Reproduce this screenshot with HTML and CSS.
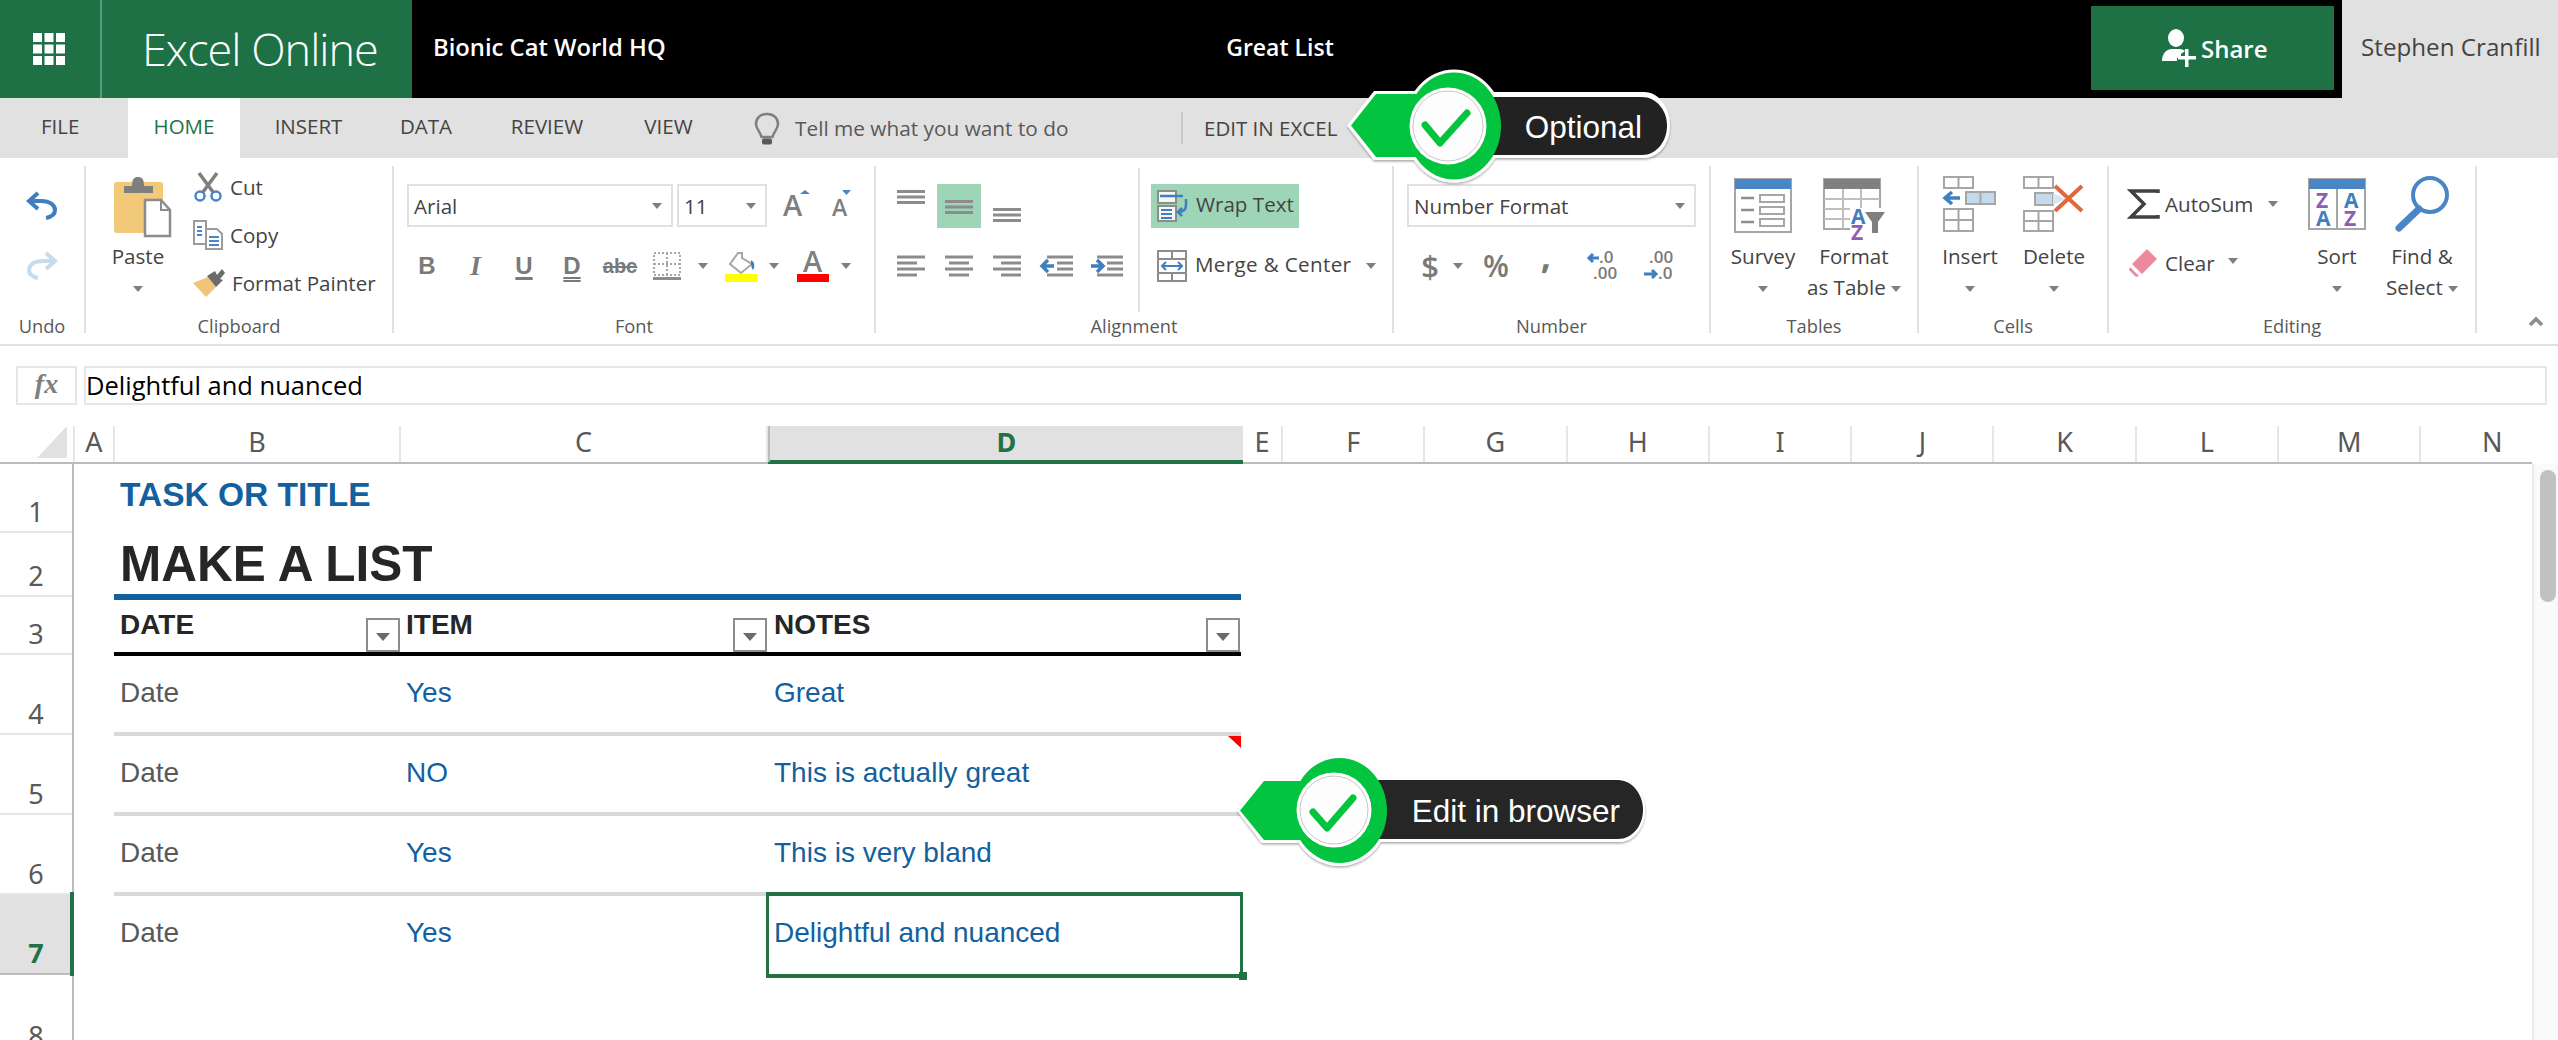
FILE: index.html
```html
<!DOCTYPE html>
<html lang="en">
<head>
<meta charset="utf-8">
<title>Excel Online</title>
<link rel="stylesheet" href="styles.css">
</head>
<body>
<div class="app">
  <header class="topbar">
    <div class="waffle">
      <svg width="32" height="32" viewBox="0 0 32 32"><g fill="#fff"><rect width="9" height="9"/><rect x="11.5" width="9" height="9"/><rect x="23" width="9" height="9"/><rect y="11.5" width="9" height="9"/><rect x="11.5" y="11.5" width="9" height="9"/><rect x="23" y="11.5" width="9" height="9"/><rect y="23" width="9" height="9"/><rect x="11.5" y="23" width="9" height="9"/><rect x="23" y="23" width="9" height="9"/></g></svg>
    </div>
    <div class="brand">Excel Online</div>
    <div class="org">Bionic Cat World HQ</div>
    <div class="doc">Great List</div>
    <button class="share">
      <svg width="36" height="38" viewBox="0 0 36 38"><g fill="#fff"><ellipse cx="15" cy="9" rx="8" ry="9"/><path d="M1 32 C1 24 6 20 11 20 L19 20 C21 20 23 21 24 22 L20 25 L20 29 L16 29 L16 32 Z"/><rect x="24" y="20" width="3.5" height="18"/><rect x="17" y="27" width="18" height="3.5"/></g></svg>
      <span>Share</span>
    </button>
    <div class="user">Stephen Cranfill</div>
  </header>

  <nav class="tabs">
    <a class="tab t-file">FILE</a>
    <a class="tab t-home">HOME</a>
    <a class="tab t-insert">INSERT</a>
    <a class="tab t-data">DATA</a>
    <a class="tab t-review">REVIEW</a>
    <a class="tab t-view">VIEW</a>
    <div class="tell">
      <svg width="26" height="33" viewBox="0 0 26 33"><path d="M13 2 C6 2 2 6.500 2 12 C2 17 6 19 7.500 25 L18.500 25 C20 19 24 17 24 12 C24 6.500 20 2 13 2 Z" fill="none" stroke="#7f7f7f" stroke-width="2.500"/><rect x="8" y="26.500" width="10" height="6" rx="2" fill="#595959"/></svg>
      <span>Tell me what you want to do</span>
    </div>
    <a class="edit-excel">EDIT IN EXCEL</a>
  </nav>

  <section class="ribbon">
    <div class="grp g-undo">
      <div class="undo-body">
        <svg width="32" height="28" viewBox="0 0 32 28"><path d="M12 1 L3 9 L12 17 M3 9 H15 C24 9 29 13 29 18 C29 23 25 25 20 26" fill="none" stroke="#3f7fbf" stroke-width="4"/></svg>
        <svg width="32" height="28" viewBox="0 0 32 28"><path d="M20 1 L29 9 L20 17 M29 9 H17 C8 9 3 13 3 18 C3 23 7 25 12 26" fill="none" stroke="#c5dbee" stroke-width="4"/></svg>
      </div>
      <div class="glabel">Undo</div>
    </div>

    <div class="grp g-clip">
      <div class="clip-body">
        <div class="big">
          <div class="big-ic big-ic-paste">
            <svg width="58" height="62" viewBox="0 0 58 62"><rect y="6" width="49" height="51" rx="3" fill="#f2c879"/><path d="M10 17 V10 H18 C18 3 20 1 24 1 C28 1 30 3 30 10 H39 V17 Z" fill="#7f7f7f"/><path d="M31 24 H47 L56 34 V60 H31 Z" fill="#fff" stroke="#8c8c8c" stroke-width="2.500"/><path d="M47 24 V34 H56" fill="none" stroke="#8c8c8c" stroke-width="2"/></svg>
          </div>
          <div class="big-t">Paste</div>
          <div class="big-t"><i class="caret"></i></div>
        </div>
        <div class="clip-list">
          <div class="sm">
            <svg width="30" height="30" viewBox="0 0 30 30"><path d="M6 1 L20 20 M24 1 L10 20" stroke="#7f7f7f" stroke-width="3.500" fill="none"/><circle cx="7" cy="24" r="4.500" fill="none" stroke="#4a86c5" stroke-width="2.500"/><circle cx="23" cy="24" r="4.500" fill="none" stroke="#4a86c5" stroke-width="2.500"/></svg>
            <span>Cut</span>
          </div>
          <div class="sm">
            <svg width="30" height="30" viewBox="0 0 30 30"><path d="M1 1 H13 V24 H1 Z" fill="#fff" stroke="#9c9c9c" stroke-width="2"/><path d="M4 7 H9 M4 11 H9 M4 15 H9" stroke="#4a86c5" stroke-width="2"/><path d="M13 9 H24 L29 14 V29 H13 Z" fill="#fff" stroke="#9c9c9c" stroke-width="2"/><path d="M16 17 H26 M16 21 H26 M16 25 H26" stroke="#4a86c5" stroke-width="2"/></svg>
            <span>Copy</span>
          </div>
          <div class="sm">
            <svg width="32" height="30" viewBox="0 0 32 30"><path d="M0 15 L15 9 L23 19 L13 29 Z" fill="#f0c47a"/><path d="M14 8 L22 3 L24 7 L29 1 L32 5 L27 11 L30 12 L23 19 Z" fill="#6b6b6b"/></svg>
            <span>Format Painter</span>
          </div>
        </div>
      </div>
      <div class="glabel">Clipboard</div>
    </div>

    <div class="grp g-font">
      <div class="rows">
        <div class="row-1 font-r1">
          <div class="sel sel-name"><span>Arial</span><i class="caret"></i></div>
          <div class="sel sel-size"><span>11</span><i class="caret"></i></div>
          <svg class="grow" width="80" height="30" viewBox="0 0 80 30"><text class="glyph-a" x="6" y="26" font-size="29">A</text><path d="M23 4 L28 0 L33 4 Z" fill="#4a86c5"/><text class="glyph-a" x="55" y="26" font-size="23">A</text><path d="M65 0 H74 L69.500 5 Z" fill="#4a86c5"/></svg>
        </div>
        <div class="row-2 font-r2">
          <b class="fmt">B</b>
          <i class="fmt fmt-i">I</i>
          <span class="fmt fmt-u">U</span>
          <span class="fmt fmt-d">D</span>
          <span class="fmt fmt-s">abc</span>
          <svg width="28" height="28" viewBox="0 0 28 28"><path d="M1 1 H27 V23 H1 Z M14 1 V23 M1 12 H27" fill="none" stroke="#a6a6a6" stroke-width="2" stroke-dasharray="2 2"/><rect y="25" width="28" height="3" fill="#8c8c8c"/></svg>
          <i class="caret"></i>
          <svg width="32" height="32" viewBox="0 0 32 32"><path d="M13 3 L17 3 L17 8 L27 14 L16 23 L5 14 Z" fill="#fff" stroke="#a6a6a6" stroke-width="2"/><path d="M26 10 C30 12 30 17 28 20 C26 18 26 14 26 10 Z" fill="#3f7fbf"/><rect y="24" width="32" height="8" fill="#ff0"/></svg>
          <i class="caret"></i>
          <svg class="end" width="32" height="32" viewBox="0 0 32 32"><text class="glyph-a" x="6" y="22" font-size="29">A</text><rect y="24" width="32" height="8" fill="#f00"/></svg>
          <i class="caret"></i>
        </div>
      </div>
      <div class="glabel">Font</div>
    </div>

    <div class="grp g-align">
      <div class="align-body">
        <div class="al-block">
          <div class="al-grid al-r1">
            <svg width="28" height="44" viewBox="0 0 28 44"><path d="M0 7.500 H28 M0 13 H28 M0 18.500 H28" stroke="#8c8c8c" stroke-width="3"/></svg>
            <div class="hl hl-cell"><svg width="28" height="44" viewBox="0 0 28 44"><path d="M0 17.500 H28 M0 23 H28 M0 28.500 H28" stroke="#8c8c8c" stroke-width="3"/></svg></div>
            <svg width="28" height="44" viewBox="0 0 28 44"><path d="M0 25.500 H28 M0 31 H28 M0 36.500 H28" stroke="#8c8c8c" stroke-width="3"/></svg>
          </div>
          <div class="al-grid al-r2">
            <svg width="28" height="22" viewBox="0 0 28 22"><path d="M0 2 H28 M0 8 H20 M0 14 H28 M0 20 H20" stroke="#8c8c8c" stroke-width="3"/></svg>
            <svg width="28" height="22" viewBox="0 0 28 22"><path d="M0 2 H28 M4 8 H24 M0 14 H28 M4 20 H24" stroke="#8c8c8c" stroke-width="3"/></svg>
            <svg width="28" height="22" viewBox="0 0 28 22"><path d="M0 2 H28 M8 8 H28 M0 14 H28 M8 20 H28" stroke="#8c8c8c" stroke-width="3"/></svg>
            <svg width="32" height="22" viewBox="0 0 32 22"><path d="M6 2 H32 M16 8 H32 M16 14 H32 M6 20 H32" stroke="#8c8c8c" stroke-width="3"/><path d="M1 11 H13 M7 5 L1 11 L7 17" stroke="#3f7fbf" stroke-width="3.500" fill="none"/></svg>
            <svg width="32" height="22" viewBox="0 0 32 22"><path d="M6 2 H32 M16 8 H32 M16 14 H32 M6 20 H32" stroke="#8c8c8c" stroke-width="3"/><path d="M0 11 H12 M6 5 L12 11 L6 17" stroke="#3f7fbf" stroke-width="3.500" fill="none"/></svg>
          </div>
        </div>
        <div class="wm-block">
          <div class="wm hl">
            <svg width="32" height="32" viewBox="0 0 32 32"><rect x="1" y="1" width="18" height="12" fill="#f5f5f5" stroke="#8c8c8c" stroke-width="2"/><path d="M3 6 H26" stroke="#3f7fbf" stroke-width="2.500"/><rect x="1" y="16" width="18" height="15" fill="#f5f5f5" stroke="#8c8c8c" stroke-width="2"/><path d="M4 20 H15 M4 24 H15 M4 28 H15" stroke="#3f7fbf" stroke-width="2"/><path d="M29 9 V15 C29 19 27 22 21 22 M25 18 L21 22 L25 26" fill="none" stroke="#3f7fbf" stroke-width="2.500"/></svg>
            <span>Wrap Text</span>
          </div>
          <div class="wm wm-merge">
            <svg width="32" height="32" viewBox="0 0 32 32"><rect x="2" y="1" width="28" height="30" fill="#fff" stroke="#8c8c8c" stroke-width="2"/><path d="M2 9 H30 M2 23 H30 M16 1 V9 M16 23 V31" stroke="#8c8c8c" stroke-width="2"/><path d="M6 16 H26 M10 12 L6 16 L10 20 M22 12 L26 16 L22 20" fill="none" stroke="#3f7fbf" stroke-width="2"/></svg>
            <span>Merge &amp; Center</span>
            <i class="caret"></i>
          </div>
        </div>
      </div>
      <div class="glabel">Alignment</div>
    </div>

    <div class="grp g-num">
      <div class="rows">
        <div class="row-1"><div class="sel sel-num"><span>Number Format</span><i class="caret"></i></div></div>
        <div class="row-2 num-r2">
          <span class="sym sym-d">$</span>
          <i class="caret"></i>
          <span class="sym sym-p">%</span>
          <span class="sym sym-c">,</span>
          <svg class="end" width="30" height="30" viewBox="0 0 30 30"><text class="dec" x="11" y="12">.0</text><text class="dec" x="5" y="28">.00</text><path d="M1 7 H11 M5 3 L1 7 L5 11" stroke="#3f7fbf" stroke-width="3" fill="none"/></svg>
          <svg width="30" height="30" viewBox="0 0 30 30"><text class="dec" x="6" y="12">.00</text><text class="dec" x="15" y="28">.0</text><path d="M1 23 H13 M9 19 L13 23 L9 27" stroke="#3f7fbf" stroke-width="3" fill="none"/></svg>
        </div>
      </div>
      <div class="glabel">Number</div>
    </div>

    <div class="grp g-tables">
      <div class="bigs bigs-tables">
        <div class="big">
          <div class="big-ic big-ic-low">
            <svg width="58" height="56" viewBox="0 0 58 56"><rect x="1" y="1" width="56" height="53" fill="#fff" stroke="#a6a6a6" stroke-width="2"/><rect x="1" y="1" width="56" height="10" fill="#4a86c5"/><path d="M7 20 H20 M7 32 H20 M7 44 H20" stroke="#8c8c8c" stroke-width="2.500"/><path d="M26 17 H50 V24 H26 Z M26 29 H50 V36 H26 Z M26 41 H50 V48 H26 Z" fill="#fff" stroke="#a6a6a6" stroke-width="2"/></svg>
          </div>
          <div class="big-t">Survey</div>
          <div class="big-t"><i class="caret"></i></div>
        </div>
        <div class="big">
          <div class="big-ic big-ic-low">
            <svg width="62" height="62" viewBox="0 0 62 62"><rect x="1" y="1" width="56" height="50" fill="#fff" stroke="#a6a6a6" stroke-width="2"/><rect x="1" y="1" width="56" height="10" fill="#808080"/><path d="M1 21 H57 M1 31 H57 M1 41 H57 M20 11 V51 M38 11 V51" stroke="#bfbfbf" stroke-width="2"/><rect x="27" y="30" width="35" height="32" fill="#fff"/><text class="az az-a" x="28" y="46">A</text><text class="az az-z" x="28" y="62">Z</text><path d="M42 34 H62 L55 44 V55 H49 V44 Z" fill="#7f7f7f"/></svg>
          </div>
          <div class="big-t">Format</div>
          <div class="big-t">as Table <i class="caret"></i></div>
        </div>
      </div>
      <div class="glabel">Tables</div>
    </div>

    <div class="grp g-cells">
      <div class="bigs bigs-cells">
        <div class="big">
          <div class="big-ic">
            <svg width="54" height="56" viewBox="0 0 54 56"><path d="M1 1 H30 V12 H1 Z M15.500 1 V12" fill="#fff" stroke="#a6a6a6" stroke-width="2"/><path d="M23 16 H52 V28 H23 Z" fill="#c5d9ed" stroke="#a6a6a6" stroke-width="2"/><path d="M37.500 16 V28" stroke="#a6a6a6" stroke-width="2"/><path d="M3 22 H17 M9 16 L2 22 L9 28" fill="none" stroke="#3f7fbf" stroke-width="3.500"/><path d="M1 33 H30 V55 H1 Z M15.500 33 V55 M1 44 H30" fill="#fff" stroke="#a6a6a6" stroke-width="2"/></svg>
          </div>
          <div class="big-t">Insert</div>
          <div class="big-t"><i class="caret"></i></div>
        </div>
        <div class="big">
          <div class="big-ic">
            <svg width="62" height="56" viewBox="0 0 62 56"><path d="M1 1 H30 V12 H1 Z M15.500 1 V12" fill="#fff" stroke="#a6a6a6" stroke-width="2"/><path d="M12 17 H30 V29 H12 Z" fill="#c5d9ed" stroke="#a6a6a6" stroke-width="2"/><path d="M30 17 L42 23 L30 29 Z" fill="#d8e6f3"/><path d="M1 35 H30 V55 H1 Z M15.500 35 V55 M1 45 H30" fill="#fff" stroke="#a6a6a6" stroke-width="2"/><path d="M32 10 L59 35 M59 10 L32 35" stroke="#e2673c" stroke-width="4"/></svg>
          </div>
          <div class="big-t">Delete</div>
          <div class="big-t"><i class="caret"></i></div>
        </div>
      </div>
      <div class="glabel">Cells</div>
    </div>

    <div class="grp g-edit">
      <div class="edit-body">
        <div class="edit-left">
          <div class="ed ed-sum">
            <svg width="30" height="30" viewBox="0 0 30 30"><path d="M29 4 V2 H2 L15 15 L2 28 H29 V26" fill="none" stroke="#404040" stroke-width="3.500"/></svg>
            <span>AutoSum</span>
            <i class="caret"></i>
          </div>
          <div class="ed ed-clear">
            <svg width="28" height="28" viewBox="0 0 28 28"><path d="M18 0 L28 10 L13 25 L3 15 Z" fill="#ec8a9d"/><path d="M1 18 L10 27 L7 28 L0 21 Z" fill="#ec8a9d"/></svg>
            <span>Clear</span>
            <i class="caret"></i>
          </div>
        </div>
        <div class="big">
          <div class="big-ic big-ic-low">
            <svg width="58" height="52" viewBox="0 0 58 52"><rect x="1" y="1" width="56" height="50" fill="#fff" stroke="#a6a6a6" stroke-width="2"/><rect x="1" y="1" width="56" height="10" fill="#4a86c5"/><path d="M29 11 V51" stroke="#a6a6a6" stroke-width="2"/><text class="az az-z" x="8" y="30">Z</text><text class="az az-a" x="36" y="30">A</text><text class="az az-a" x="8" y="48">A</text><text class="az az-z" x="36" y="48">Z</text></svg>
          </div>
          <div class="big-t">Sort</div>
          <div class="big-t"><i class="caret"></i></div>
        </div>
        <div class="big">
          <div class="big-ic">
            <svg width="56" height="56" viewBox="0 0 56 56"><ellipse cx="36" cy="19" rx="17" ry="17" fill="none" stroke="#4a86c5" stroke-width="4"/><path d="M25 33 L5 52" stroke="#4a86c5" stroke-width="7" stroke-linecap="round"/></svg>
          </div>
          <div class="big-t">Find &amp;</div>
          <div class="big-t">Select <i class="caret"></i></div>
        </div>
      </div>
      <div class="glabel">Editing</div>
    </div>

    <div class="collapse">
      <svg width="16" height="11" viewBox="0 0 16 11"><path d="M2 9 L8 3 L14 9" fill="none" stroke="#8c8c8c" stroke-width="3.500"/></svg>
    </div>
  </section>

  <div class="formula">
    <div class="fx">fx</div>
    <div class="finput">Delightful and nuanced</div>
  </div>

  <div class="colheads">
    <div class="corner"><svg width="30" height="32" viewBox="0 0 30 32"><path d="M30 0 V32 H0 Z" fill="#e1e1e1"/></svg></div>
    <div class="ch ch-a">A</div>
    <div class="ch ch-b">B</div>
    <div class="ch ch-c">C</div>
    <div class="ch ch-d">D</div>
    <div class="ch ch-e">E</div>
    <div class="ch">F</div>
    <div class="ch">G</div>
    <div class="ch">H</div>
    <div class="ch">I</div>
    <div class="ch">J</div>
    <div class="ch">K</div>
    <div class="ch">L</div>
    <div class="ch">M</div>
    <div class="ch ch-n">N</div>
  </div>

  <main class="sheet">
    <div class="rowheads">
      <div class="rh rh-1">1</div>
      <div class="rh rh-2">2</div>
      <div class="rh rh-3">3</div>
      <div class="rh rh-n">4</div>
      <div class="rh rh-n">5</div>
      <div class="rh rh-n">6</div>
      <div class="rh rh-n rh-sel">7</div>
      <div class="rh rh-8">8</div>
    </div>
    <div class="cells">
      <div class="srow srow-1"><div class="task">TASK OR TITLE</div></div>
      <div class="srow srow-2"><div class="make">MAKE A LIST</div></div>
      <div class="srow srow-3">
        <div class="cell c-b"><span>DATE</span><button class="filter"><i class="caret"></i></button></div>
        <div class="cell c-c"><span>ITEM</span><button class="filter"><i class="caret"></i></button></div>
        <div class="cell c-d"><span>NOTES</span><button class="filter"><i class="caret"></i></button></div>
      </div>
      <div class="srow srow-data">
        <div class="cell c-b">Date</div><div class="cell c-c blue">Yes</div><div class="cell c-d blue">Great</div>
      </div>
      <div class="srow srow-data">
        <div class="cell c-b">Date</div><div class="cell c-c blue">NO</div><div class="cell c-d blue">This is actually great<i class="comment"></i></div>
      </div>
      <div class="srow srow-data">
        <div class="cell c-b">Date</div><div class="cell c-c blue">Yes</div><div class="cell c-d blue">This is very bland</div>
      </div>
      <div class="srow srow-data srow-last">
        <div class="cell c-b">Date</div><div class="cell c-c blue">Yes</div><div class="cell c-d blue">Delightful and nuanced</div>
      </div>
      <div class="selection"><i class="handle"></i></div>
    </div>
    <div class="vscroll"><div class="thumb"></div></div>
  </main>

  <div class="callout callout-opt">
    <svg width="330" height="124" viewBox="1345 65 330 124">
      <defs><filter id="sh1" x="-5%" y="-5%" width="110%" height="115%"><feDropShadow dx="0" dy="1.500" stdDeviation="1.200" flood-color="#000" flood-opacity=".35"/></filter></defs>
      <g filter="url(#sh1)">
        <path d="M1430 92 H1644 C1659 92 1670 108 1670 125 C1670 143 1659 158 1644 158 H1430 Z" fill="#fff"/>
        <path d="M1347 125.500 L1374 91 H1420 V160 H1374 Z" fill="#fff"/>
        <ellipse cx="1454" cy="126" rx="50" ry="56.500" fill="#fff"/>
      </g>
      <path d="M1470 97 H1642 C1656 97 1667 110 1667 125.500 C1667 142 1656 155 1642 155 H1470 Z" fill="#222"/>
      <path d="M1351 125.500 L1376 94 H1420 V157 H1376 Z" fill="#03c43f"/>
      <ellipse cx="1454" cy="126" rx="47" ry="53.500" fill="#03c43f"/>
      <circle cx="1448" cy="126" r="38.500" fill="#fff"/>
      <circle cx="1448" cy="126" r="35" fill="#fdfdfd" stroke="#c8c8c8" stroke-width="1"/>
      <path d="M1425 125 L1440 143 L1467 113" fill="none" stroke="#03c43f" stroke-width="7" stroke-linecap="round" stroke-linejoin="round"/>
    </svg>
    <span class="callout-label">Optional</span>
  </div>

  <div class="callout callout-edit">
    <svg width="415" height="118" viewBox="1235 752 415 118">
      <defs><filter id="sh2" x="-5%" y="-5%" width="110%" height="115%"><feDropShadow dx="0" dy="1.500" stdDeviation="1.200" flood-color="#000" flood-opacity=".35"/></filter></defs>
      <g filter="url(#sh2)">
        <path d="M1320 778 H1619 C1634 778 1645 794 1645 810 C1645 827 1634 842 1619 842 H1320 Z" fill="#fff"/>
        <path d="M1237 810.500 L1262 779 H1310 V843 H1262 Z" fill="#fff"/>
        <ellipse cx="1339.500" cy="811" rx="50" ry="55" fill="#fff"/>
      </g>
      <path d="M1370 780 H1618 C1632 780 1643 794 1643 810 C1643 826 1632 839 1618 839 H1370 Z" fill="#262626"/>
      <path d="M1240 810.500 L1264 781 H1310 V840 H1264 Z" fill="#03c43f"/>
      <ellipse cx="1339.500" cy="810.500" rx="47.500" ry="52.500" fill="#03c43f"/>
      <circle cx="1334" cy="810" r="37.500" fill="#fff"/>
      <circle cx="1334" cy="810" r="34" fill="#fdfdfd" stroke="#c8c8c8" stroke-width="1"/>
      <path d="M1313 812 L1327 828 L1353 798" fill="none" stroke="#03c43f" stroke-width="7" stroke-linecap="round" stroke-linejoin="round"/>
    </svg>
    <span class="callout-label">Edit in browser</span>
  </div>
</div>
</body>
</html>
```

FILE: styles.css
```css
* { box-sizing: border-box; }
html, body { margin: 0; padding: 0; height: 100%; overflow: hidden; background: #fff; }
body { font-family: "Open Sans", "Noto Sans", sans-serif; color: #444; }
svg { display: block; flex: none; overflow: visible; }
.app { position: relative; width: 2558px; height: 1040px; overflow: hidden; }

.caret { display: inline-block; width: 0; height: 0; flex: none; border-left: 5.5px solid transparent; border-right: 5.5px solid transparent; border-top: 6px solid #7f7f7f; vertical-align: middle; }

/* top bar */
.topbar { display: flex; height: 98px; background: #000; color: #fff; align-items: stretch; }
.waffle { width: 102px; background: #1e7145; border-right: 2px solid #5a9a78; display: flex; align-items: center; justify-content: center; padding-right: 2px; }
.brand { width: 310px; background: #1e7145; font-size: 45px; font-weight: 300; line-height: 98px; padding-left: 40px; white-space: nowrap; letter-spacing: -1px; }
.org { width: 588px; font-size: 23.800px; font-weight: 600; line-height: 94px; padding-left: 21px; white-space: nowrap; }
.doc { width: 560px; font-size: 23px; font-weight: 600; line-height: 94px; text-align: center; }
.share { margin: 6px 0 8px 531px; width: 243px; border: 0; background: #1e7145; color: #fff; font: 600 24px "Open Sans", sans-serif; display: flex; align-items: center; padding: 0 0 0 70px; gap: 4px; }
.user { margin-left: 8px; flex: 1; background: #e1e1e1; color: #444; font-size: 24.200px; line-height: 94px; padding-left: 19px; white-space: nowrap; }

/* tabs */
.tabs { display: grid; grid-template-columns: 128px 112px 137px 98px 144px 99px 463px 1fr; height: 60px; background: #e1e1e1; align-items: stretch; }
.tab { font-size: 20.500px; line-height: 56px; text-align: center; color: #444; }
.t-file { text-align: left; padding-left: 41px; }
.t-home { background: #fff; color: #217346; }
.tell { display: flex; align-items: center; padding-left: 36px; gap: 15px; font-size: 20.800px; color: #595959; }
.tell span { margin-top: -1px; white-space: nowrap; }
.edit-excel { font-size: 20.500px; line-height: 32px; height: 32px; margin-top: 14px; border-left: 2px solid #c8c8c8; padding-left: 21px; color: #444; white-space: nowrap; }

/* ribbon */
.ribbon { display: flex; height: 188px; padding-top: 8px; border-bottom: 2px solid #e1e1e1; }
.grp { height: 167px; border-right: 2px solid #e1e1e1; display: flex; flex-direction: column; font-size: 20.600px; color: #444; }
.glabel { margin-top: auto; text-align: center; font-size: 18.300px; color: #595959; line-height: 24px; height: 24px; white-space: nowrap; margin-bottom: -5px; }
.g-undo { width: 86px; }
.g-clip { width: 308px; }
.g-font { width: 482px; }
.g-align { width: 518px; }
.g-num { width: 317px; }
.g-tables { width: 208px; }
.g-cells { width: 190px; }
.g-edit { width: 368px; }
.collapse { flex: 1; display: flex; justify-content: flex-end; align-items: flex-end; padding: 0 14px 6px 0; height: 167px; }

.undo-body { display: flex; flex-direction: column; align-items: center; gap: 32px; padding-top: 26px; }

.big { display: flex; flex-direction: column; align-items: center; white-space: nowrap; }
.big-ic { height: 75px; padding-top: 10px; }
.big-ic-low { padding-top: 12px; }
.big-ic-paste { padding-left: 10px; }
.big-t { line-height: 31px; height: 31px; }

.clip-body { display: flex; padding-left: 12px; }
.clip-body > .big { width: 80px; }
.clip-list { display: grid; grid-auto-rows: 48px; margin: -3px 0 0 15px; }
.sm { display: flex; align-items: center; gap: 7px; white-space: nowrap; }

.rows { padding-top: 18px; }
.row-1 { height: 44px; }
.row-2 { margin-top: 16px; height: 44px; align-items: center; }
.font-r1 { display: flex; padding-left: 13px; gap: 4px; }
.sel { height: 43px; border: 2px solid #e1e1e1; display: flex; align-items: center; padding: 0 9px 0 5px; color: #444; white-space: nowrap; }
.sel .caret { margin-left: auto; }
.sel-name { width: 266px; }
.sel-size { width: 90px; }
.sel-num { width: 289px; margin-left: 13px; }
.grow { margin: 6px 0 0 6px; }
.glyph-a { font-family: "Open Sans", sans-serif; fill: #7f7f7f; font-weight: 600; }
.font-r2 { display: grid; grid-template-columns: 48px 49px 48px 48px 48px 46px 26px 50px 16px 47px 34px; justify-items: center; margin-left: 9px; }
.end { justify-self: end; }
.fmt { font-family: "Liberation Sans", sans-serif; font-size: 24px; font-weight: 700; color: #7a7a7a; font-style: normal; }
.fmt-i { font-family: "Liberation Serif", serif; font-style: italic; font-size: 27px; }
.fmt-u { text-decoration: underline; text-underline-offset: 3px; text-decoration-thickness: 2.500px; }
.fmt-d { text-decoration: underline double; text-underline-offset: 3px; }
.fmt-s { text-decoration: line-through; font-size: 20px; }

.align-body { display: flex; }
.al-block { width: 264px; height: 144px; margin-top: 2px; padding: 16px 0 0 11px; border-right: 2px solid #e1e1e1; }
.al-grid { display: grid; grid-template-columns: 48px 48px 48px 52px 48px; justify-items: center; align-items: center; }
.al-r1 { height: 44px; }
.al-r2 { margin-top: 27px; }
.hl { background: #9fd5b7; }
.hl-cell { width: 44px; height: 44px; display: flex; justify-content: center; }
.wm-block { padding: 18px 0 0 11px; }
.wm { display: flex; align-items: center; height: 44px; width: 148px; padding-left: 6px; gap: 7px; white-space: nowrap; }
.wm span { margin-top: -5px; }
.wm-merge { margin-top: 16px; width: 230px; }
.wm-merge span { letter-spacing: .35px; }
.wm-merge svg { margin-left: -1px; }
.wm-merge .caret { margin-left: 8px; }

.num-r2 { display: grid; grid-template-columns: 46px 10px 66px 24px 65px 80px; justify-items: center; margin-left: 13px; }
.sym { font-family: "Open Sans", sans-serif; color: #7a7a7a; font-weight: 600; line-height: 1; }
.sym-d { font-size: 31px; }
.sym-p { font-size: 30px; }
.sym-c { font-size: 36px; margin-top: -22px; padding-left: 10px; font-weight: 700; }
.dec { font: 600 17px "Open Sans", sans-serif; fill: #7a7a7a; }

.bigs { display: grid; padding-left: 10px; }
.bigs-tables { grid-template-columns: 84px 98px; }
.bigs-cells { grid-template-columns: 82px 86px; }
.az { font: 700 21px "Open Sans", sans-serif; }
.az-a { fill: #3f7fbf; }
.az-z { fill: #8f5cb8; }

.edit-body { display: grid; grid-template-columns: 168px 80px 90px; padding-left: 20px; }
.edit-left { padding-top: 18px; }
.ed { display: flex; align-items: center; height: 44px; gap: 6px; white-space: nowrap; }
.ed-sum { height: 40px; }
.ed-sum .caret { margin-left: 9px; }
.ed-clear { margin-top: 17px; gap: 8px; }
.ed-clear .caret { margin: -4px 0 0 5px; }

/* formula bar */
.formula { display: flex; height: 39px; margin-top: 20px; padding: 0 11px 0 16px; gap: 7px; }
.fx { width: 61px; border: 2px solid #e6e6e6; text-align: center; font: italic 700 28px/32px "Liberation Serif", serif; color: #7f7f7f; }
.finput { flex: 1; border: 2px solid #e6e6e6; font-size: 25.500px; line-height: 34px; color: #000; padding-left: 0; white-space: nowrap; }

/* column headers */
.colheads { display: grid; grid-template-columns: 73px 42px 286px 367px 475px 40px repeat(8, 142.300px) 112px; height: 38px; margin-top: 21px; border-bottom: 2px solid #bbb; width: 2532px; }
.corner { padding: 0 6px 0 37px; }
.ch { font-family: "Noto Sans", sans-serif; font-size: 27px; line-height: 32px; color: #595959; text-align: center; border-right: 2px solid #e6e6e6; }
.ch-a { border-left: 2px solid #e6e6e6; }
.ch-d { background: #e1e1e1; color: #217346; font-weight: 700; border-left: 2px solid #bbb; border-right: 0; box-shadow: 0 2px 0 #217346, inset 0 -2px 0 #217346; }
.ch-n { border-right: 0; padding-left: 30px; }

/* sheet */
.sheet { display: flex; height: 576px; }
.rowheads { width: 74px; flex: none; border-right: 2px solid #bbb; }
.rh { font-family: "Noto Sans", sans-serif; font-size: 27px; color: #595959; text-align: center; border-bottom: 2px solid #e6e6e6; display: flex; align-items: flex-end; justify-content: center; line-height: 34px; padding-bottom: 2px; }
.rh-1 { height: 69px; }
.rh-2 { height: 64px; }
.rh-3 { height: 58px; }
.rh-n { height: 80px; }
.rh-8 { height: 80px; border-bottom: 0; }
.rh-sel { position: relative; background: #e1e1e1; color: #217346; font-weight: 700; border-bottom: 2px solid #bbb; padding-bottom: 3px; }
.rh-sel::after { content: ""; position: absolute; right: -2px; top: -3px; bottom: -3px; width: 4px; background: #217346; }

.cells { position: relative; flex: 1; font-family: "Liberation Sans", Arial, sans-serif; color: #595959; font-size: 28px; }
.srow { margin-left: 40px; width: 1127px; display: flex; }
.srow-1 { height: 69px; }
.srow-2 { height: 67px; border-bottom: 6px solid #13609f; }
.srow-3 { height: 56px; border-bottom: 4px solid #000; font-weight: 700; color: #262626; line-height: 50px; }
.srow-data { height: 80px; border-bottom: 4px solid #d9d9d9; line-height: 74px; }
.srow-last { border-bottom: 0; }
.task { padding-left: 6px; font-size: 33.500px; font-weight: 700; color: #13609f; line-height: 62px; }
.make { padding-left: 6px; font-size: 49.500px; font-weight: 700; color: #262626; line-height: 61px; }
.cell { position: relative; display: flex; justify-content: space-between; white-space: nowrap; }
.c-b { width: 287px; padding-left: 6px; }
.c-c { width: 367px; padding-left: 5px; }
.c-d { width: 473px; padding-left: 6px; }
.blue { color: #13609f; }
.filter { align-self: flex-end; width: 34px; height: 34px; background: #fff; border: 2px solid #8c8c8c; padding: 0; margin-right: 1px; display: flex; align-items: center; justify-content: center; }
.filter .caret { border-left-width: 7px; border-right-width: 7px; border-top-width: 8px; border-top-color: #6b6b6b; margin-top: 4px; }
.comment { position: absolute; right: 0; top: 0; width: 0; height: 0; border-top: 12px solid #f00; border-left: 13px solid transparent; }
.selection { position: absolute; left: 692px; top: 428px; width: 477px; height: 86px; border-style: solid; border-color: #217346; border-width: 4px 3px; }
.handle { position: absolute; right: -7px; bottom: -6px; width: 8px; height: 8px; background: #217346; }

.vscroll { width: 26px; flex: none; background: #fafafa; border-left: 2px solid #ececec; padding: 6px 2px 0 6px; }
.thumb { width: 16px; height: 132px; background: #c1c1c1; border-radius: 8px; }

/* callouts */
.callout { position: absolute; display: flex; justify-content: flex-end; align-items: center; }
.callout svg { position: absolute; left: 0; top: 0; }
.callout-opt { left: 1345px; top: 65px; width: 330px; height: 124px; padding: 0 33px 0 0; }
.callout-edit { left: 1235px; top: 752px; width: 415px; height: 118px; padding: 0 30px 0 0; }
.callout-label { position: relative; font-family: "Liberation Sans", Arial, sans-serif; font-size: 31.500px; color: #fff; margin-top: 1px; }
```
